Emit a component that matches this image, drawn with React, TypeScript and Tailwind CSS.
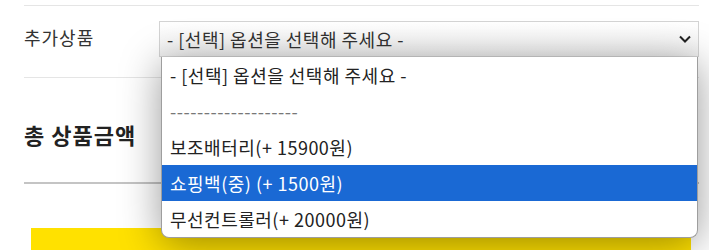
import React from 'react'

const options = [
  { label: '- [선택] 옵션을 선택해 주세요 -' },
  { label: '-------------------', muted: true },
  { label: '보조배터리(+ 15900원)' },
  { label: '쇼핑백(중) (+ 1500원)', active: true },
  { label: '무선컨트롤러(+ 20000원)' },
]

const App = () => {
  return (
    <div className="relative w-[709px] h-[250px] overflow-hidden bg-white text-[#222] font-['Noto_Sans_CJK_KR',sans-serif]">
      <div className="ml-6 w-[675px] pt-[5px]">
        {/* 추가상품 row */}
        <div className="flex items-start border-t border-b border-[#e5e5e5] pt-[15px] pb-[20px]">
          <div className="w-[135px] pt-[3px] text-[18px] tracking-[1px] text-[#333]">추가상품</div>
          <div className="flex h-[36px] flex-1 items-center justify-between border border-[#d4d4d4] bg-gradient-to-b from-white to-[#f1f1f1] pl-[7px] pr-[6px] text-[18px] tracking-[0.5px] text-[#333]">
            <span>- [선택] 옵션을 선택해 주세요 -</span>
            <svg width="14" height="14" viewBox="0 0 14 14" fill="none">
              <path d="M2 4.5 L7 9.5 L12 4.5" stroke="#222" strokeWidth="2" />
            </svg>
          </div>
        </div>

        {/* 총 상품금액 */}
        <div className="border-b-2 border-[#c4c4c4] pt-[40px] pb-[31px] text-[22px] font-bold tracking-[1px] text-[#222]">
          총 상품금액
        </div>

        <div className="ml-[7px] mt-[44px] h-[30px] w-[660px] bg-[#ffe100]" />
      </div>

      {/* open dropdown list */}
      <div className="absolute left-[161px] top-[57px] w-[537px] overflow-hidden rounded-b-[8px] border border-t-0 border-[#9e9e9e] bg-white shadow-[0_6px_40px_rgba(0,0,0,0.4)]">
        {options.map((o) => (
          <div
            key={o.label}
            className={
              o.active
                ? 'flex h-[36px] items-center bg-[#1a69d4] pl-[8px] text-[18px] tracking-[0.5px] text-white'
                : o.muted
                  ? 'flex h-[36px] items-center pl-[8px] text-[18px] tracking-[0.5px] text-[#777]'
                  : 'flex h-[36px] items-center pl-[8px] text-[18px] tracking-[0.5px] text-[#222]'
            }
          >
            {o.label}
          </div>
        ))}
      </div>
    </div>
  )
}

export default App
